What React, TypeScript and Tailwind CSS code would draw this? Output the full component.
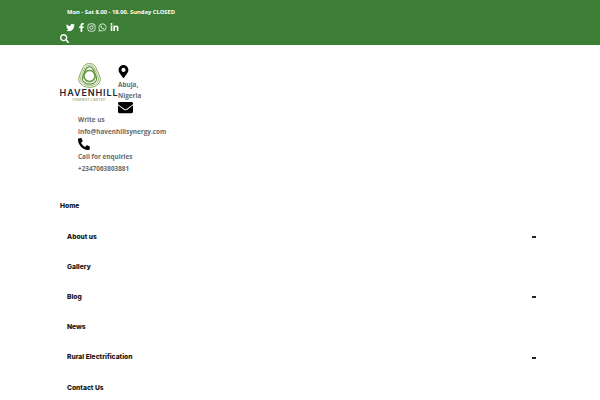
import { FaTwitter, FaFacebookF, FaInstagram, FaWhatsapp, FaLinkedinIn, FaSearch, FaMapMarkerAlt, FaEnvelope, FaPhone } from "react-icons/fa";

const menu = [
  { label: "About us", dash: true },
  { label: "Gallery", dash: false },
  { label: "Blog", dash: true },
  { label: "News", dash: false },
  { label: "Rural Electrification", dash: true },
  { label: "Contact Us", dash: false },
];

function Emblem() {
  return (
    <svg width="23" height="25" viewBox="0 0 23 25" fill="none" stroke="#7fa650">
      <path d="M11.500 .6C15 .6 17 2 18.500 6C20 10 22.500 13 22.200 17C21.800 21 17 24.400 11.500 24.400C6 24.400 1.200 21 .8 17C.5 13 3 10 4.500 6C6 2 8 .6 11.500 .6Z" strokeWidth="1" />
      <path d="M11.500 2.200C14.500 2.200 16 3.500 17.200 7C18.500 10.500 20.800 13.500 20.400 16.800C20 20 16 22.800 11.500 22.800C7 22.800 3 20 2.600 16.800C2.200 13.500 4.500 10.500 5.800 7C7 3.500 8.500 2.200 11.500 2.200Z" strokeWidth="1" stroke="#9dbb74" />
      <path d="M11.500 3.800C14 3.800 15 5 16 8C17 11 19 13.500 18.600 16.500C18.200 19 15 21.200 11.500 21.200C8 21.200 4.800 19 4.400 16.500C4 13.500 6 11 7 8C8 5 9 3.800 11.500 3.800Z" strokeWidth="1.200" stroke="#5f8f3c" />
      <circle cx="11.500" cy="13" r="5.600" strokeWidth="1.800" stroke="#6f9a45" fill="#ffffff" />
    </svg>
  );
}

export default function App() {
  return (
    <div className="h-[400px] w-[600px] overflow-hidden bg-white opacity-[0.99] font-['Open_Sans',sans-serif]">
      <header className="h-[45px] bg-[#3a7d34] px-[60px] text-white">
        <div className="flex h-[22px] items-center pl-[7px] pt-[3px] text-[5.800px] leading-none font-bold">
          Mon - Sat 8.00 - 18.00. Sunday CLOSED
        </div>
        <div className="flex h-[10px] items-center pl-[6px] text-[9px]">
          <FaTwitter className="mr-[1.500px]" />
          <FaFacebookF className="mr-[1.500px]" />
          <FaInstagram className="mr-[1.500px]" />
          <FaWhatsapp className="mr-[3px]" />
          <FaLinkedinIn />
        </div>
        <div className="mt-[2px] text-[9px]">
          <FaSearch />
        </div>
      </header>

      <section className="px-[60px] pt-[17px] text-[6.400px] leading-[11px] font-bold text-[#6a6a6a]">
        <div className="flex">
          <div className="flex h-[44px] w-[58px] flex-col items-center pt-[1px]">
            <Emblem />
            <div className="text-[9px] leading-[10px] font-semibold tracking-[0.900px] whitespace-nowrap text-[#1a2430] font-['Inter',sans-serif]">HAVENHILL</div>
            <div className="mt-[-1px] text-[4px] leading-[5px] font-normal text-[#7d8f5a]">SYNERGY LIMITED</div>
          </div>
          <div className="pt-[3px]">
            <FaMapMarkerAlt className="ml-[-1px] h-[13px] w-[13px] text-black" />
            <div className="mt-[1px]">Abuja,</div>
            <div>Nigeria</div>
            <FaEnvelope className="mt-[-1px] h-[15px] w-[15px] text-black" />
          </div>
        </div>
        <div className="pl-[18px]">
          <div className="mt-[-1px]">Write us</div>
          <div className="mt-[1px]">info@havenhillsynergy.com</div>
          <FaPhone className="mt-[1px] h-[12px] w-[12px] scale-x-[-1] text-black" />
          <div className="mt-[1px]">Call for enquiries</div>
          <div className="mt-[1px]">+2347063803881</div>
        </div>
      </section>

      <nav className="mt-[27.400px] px-[60px] text-[6.700px] leading-[10px] font-extrabold text-[#111] font-['Inter',sans-serif]">
        <div>Home</div>
        {menu.map((item) => (
          <div key={item.label} className="mt-[20.200px] flex items-center justify-between pl-[7px] pr-[4px]">
            <span>{item.label}</span>
            {item.dash && <span className="mt-[1px] h-[2px] w-[4px] bg-[#222]" />}
          </div>
        ))}
      </nav>
    </div>
  );
}
